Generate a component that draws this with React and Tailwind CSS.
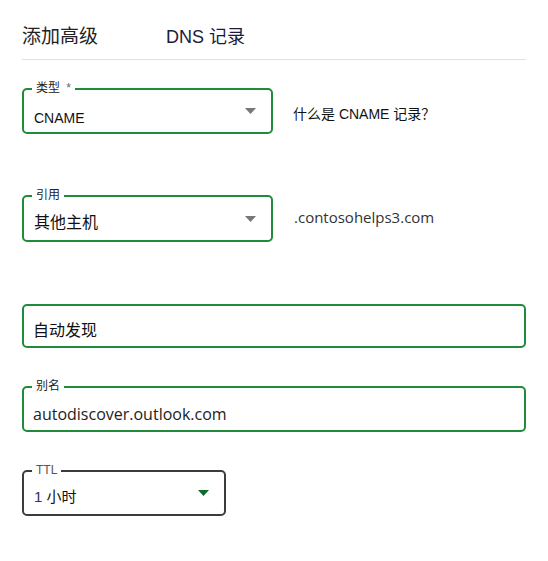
export default function App() {
  const cjk = { fontFamily: '"Liberation Sans", "Noto Sans CJK SC", sans-serif' };

  const Arrow = ({ color }) => (
    <svg width="11" height="6" viewBox="0 0 11 6" className="absolute right-[15px] top-1/2 -translate-y-1/2">
      <path d="M0 0 L11 0 L5.5 6 Z" fill={color} />
    </svg>
  );

  const Label = ({ children }) => (
    <span className="absolute left-[8px] -top-[10px] bg-white px-[4px] text-[12px] leading-[16px] text-[#222]" style={cjk}>
      {children}
    </span>
  );

  return (
    <div className="w-[548px] h-[561px] bg-white px-[22px]" style={cjk}>
      {/* Header */}
      <div className="flex items-center pt-[25px] pb-[10px] border-b border-[#e1e1e1] w-[504px]">
        <span className="text-[19px] leading-[24px] text-[#222] w-[144px]">添加高级</span>
        <span className="text-[18px] leading-[24px] text-[#1b1b3a]">DNS 记录</span>
      </div>

      {/* Type */}
      <div className="flex items-center mt-[28px]">
        <div className="relative w-[251px] h-[46px] border-2 border-[#1f8b3b] rounded-[5px] flex items-center pt-[15px] pl-[10px]">
          <Label>
            类型 <span className="text-[#666] ml-[3px]">*</span>
          </Label>
          <span className="text-[14px] text-[#111]">CNAME</span>
          <Arrow color="#777" />
        </div>
        <span className="ml-[20px] text-[14px] text-[#111] pt-[6px]">什么是 CNAME 记录？</span>
      </div>

      {/* Reference */}
      <div className="flex items-center mt-[61px]">
        <div className="relative w-[251px] h-[47px] border-2 border-[#1f8b3b] rounded-[5px] flex items-center pt-[8px] pl-[10px]">
          <Label>引用</Label>
          <span className="text-[16px] text-[#111]">其他主机</span>
          <Arrow color="#777" />
        </div>
        <span className="ml-[21px] text-[15px] text-[#333] -mt-[2px]" style={{ fontFamily: '"Open Sans", sans-serif' }}>.contosohelps3.com</span>
      </div>

      {/* Name */}
      <div className="mt-[62px] w-[504px] h-[44px] border-2 border-[#1f8b3b] rounded-[5px] flex items-center pt-[9px] pl-[9px]">
        <span className="text-[16px] text-[#111]">自动发现</span>
      </div>

      {/* Alias */}
      <div className="relative mt-[38px] w-[504px] h-[46px] border-2 border-[#1f8b3b] rounded-[5px] flex items-center pt-[10px] pl-[9px]">
        <Label>别名</Label>
        <span className="text-[16px] text-[#222]" style={{ fontFamily: '"Open Sans", sans-serif' }}>autodiscover.outlook.com</span>
      </div>

      {/* TTL */}
      <div className="relative mt-[38px] w-[204px] h-[46px] border-2 border-[#3c3c3c] rounded-[5px] flex items-center pt-[8px] pl-[10px]">
        <Label>
          <span className="text-[#555]">TTL</span>
        </Label>
        <span className="text-[15px] text-[#111]">
          <span className="text-[#3b2a6b]">1</span> 小时
        </span>
        <Arrow color="#0d6b2c" />
      </div>
    </div>
  );
}
